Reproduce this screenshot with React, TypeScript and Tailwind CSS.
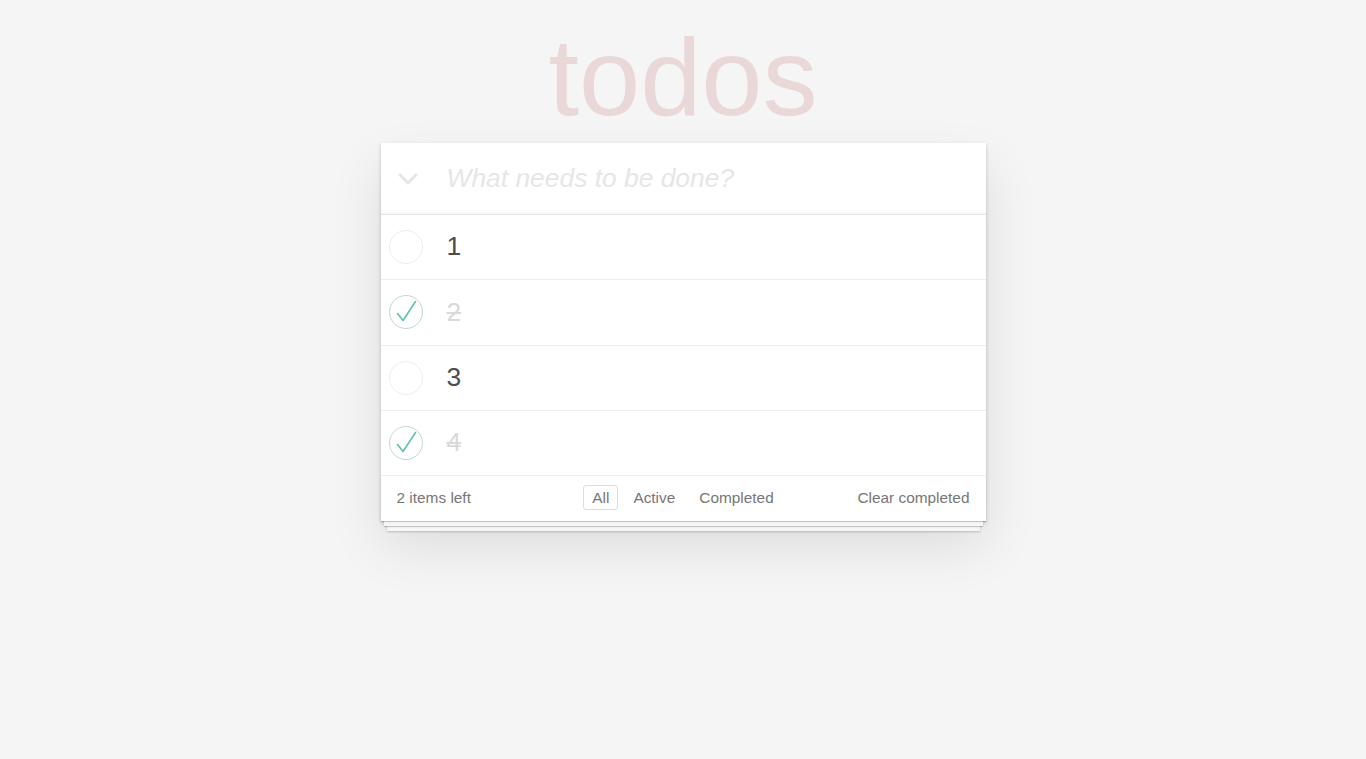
import React, { useState } from 'react';

type Todo = { id: number; title: string; done: boolean };

const INITIAL: Todo[] = [
  { id: 1, title: '1', done: false },
  { id: 2, title: '2', done: true },
  { id: 3, title: '3', done: false },
  { id: 4, title: '4', done: true },
];

function Check({ done }: { done: boolean }) {
  return (
    <svg width="36" height="36" viewBox="0 0 36 36">
      <circle cx="18" cy="18" r="16.5" fill="none" stroke={done ? '#bddad5' : '#ededed'} strokeWidth="1" />
      {done && (
        <polyline points="9.5,19.5 15,26.5 27.5,7.5" fill="none" stroke="#5dc2af" strokeWidth="1.6" strokeLinecap="round" strokeLinejoin="round" />
      )}
    </svg>
  );
}

export default function App() {
  const [todos, setTodos] = useState<Todo[]>(INITIAL);
  const [filter, setFilter] = useState<'all' | 'active' | 'completed'>('all');
  const [draft, setDraft] = useState('');

  const left = todos.filter(t => !t.done).length;
  const shown = todos.filter(t => (filter === 'all' ? true : filter === 'active' ? !t.done : t.done));

  const toggle = (id: number) => setTodos(todos.map(t => (t.id === id ? { ...t, done: !t.done } : t)));

  const filterClass = (key: string) =>
    `px-[8px] py-[3px] mx-[3px] leading-[17px] rounded-[3px] border ${
      filter === key ? 'border-[rgba(175,47,47,0.2)]' : 'border-transparent hover:border-[rgba(175,47,47,0.1)]'
    }`;

  return (
    <div className="min-h-screen bg-[#f5f5f5] pt-[22px] text-[#4d4d4d]" style={{ fontFamily: '"Liberation Sans", Arial, sans-serif' }}>
      <h1 className="text-center text-[110px] leading-[110px] font-thin text-[rgba(175,47,47,0.15)] mb-[11px]">todos</h1>

      <section className="relative w-[605px] mx-auto bg-white shadow-[0_2px_4px_0_rgba(0,0,0,0.2),0_25px_50px_0_rgba(0,0,0,0.1)]">
        {/* Header */}
        <div className="h-[72px] flex items-center border-b border-[#e6e6e6] shadow-[inset_0_-2px_1px_rgba(0,0,0,0.03)]">
          <button className="w-[66px] h-full flex items-center pl-[16px] pt-[1px]" onClick={() => setTodos(todos.map(t => ({ ...t, done: left > 0 })))}>
            <svg width="22" height="14" viewBox="0 0 22 14">
              <polyline points="2,2 11,11 20,2" fill="none" stroke="#e6e6e6" strokeWidth="3" />
            </svg>
          </button>
          <input
            value={draft}
            onChange={e => setDraft(e.target.value)}
            onKeyDown={e => {
              if (e.key === 'Enter' && draft.trim()) {
                setTodos([...todos, { id: Date.now(), title: draft.trim(), done: false }]);
                setDraft('');
              }
            }}
            placeholder="What needs to be done?"
            className="flex-1 h-full text-[26.4px] text-[#4d4d4d] italic placeholder:text-[#e6e6e6] outline-none bg-transparent"
          />
        </div>

        {/* List */}
        <ul>
          {shown.map(t => (
            <li key={t.id} className="h-[65.3px] flex items-center border-b border-[#ededed]">
              <button className="w-[66px] pl-[7px] flex items-center" onClick={() => toggle(t.id)}>
                <Check done={t.done} />
              </button>
              <span className={`text-[26.4px] ${t.done ? 'text-[#d9d9d9] line-through' : 'text-[#4d4d4d]'}`}>{t.title}</span>
            </li>
          ))}
        </ul>

        {/* Footer */}
        <footer className="h-[45px] grid grid-cols-[1fr_auto_1fr] items-center px-[16px] pb-[2px] text-[15.4px] text-[#777] shadow-[0_1px_1px_rgba(0,0,0,0.2),0_8px_0_-3px_#f6f6f6,0_9px_1px_-3px_rgba(0,0,0,0.2),0_16px_0_-6px_#f6f6f6,0_17px_2px_-6px_rgba(0,0,0,0.2)]">
          <span>{left} items left</span>
          <div className="flex items-center">
            <button className={filterClass('all')} onClick={() => setFilter('all')}>All</button>
            <button className={filterClass('active')} onClick={() => setFilter('active')}>Active</button>
            <button className={filterClass('completed')} onClick={() => setFilter('completed')}>Completed</button>
          </div>
          <button className="justify-self-end hover:underline" onClick={() => setTodos(todos.filter(t => !t.done))}>
            Clear completed
          </button>
        </footer>
      </section>
    </div>
  );
}
